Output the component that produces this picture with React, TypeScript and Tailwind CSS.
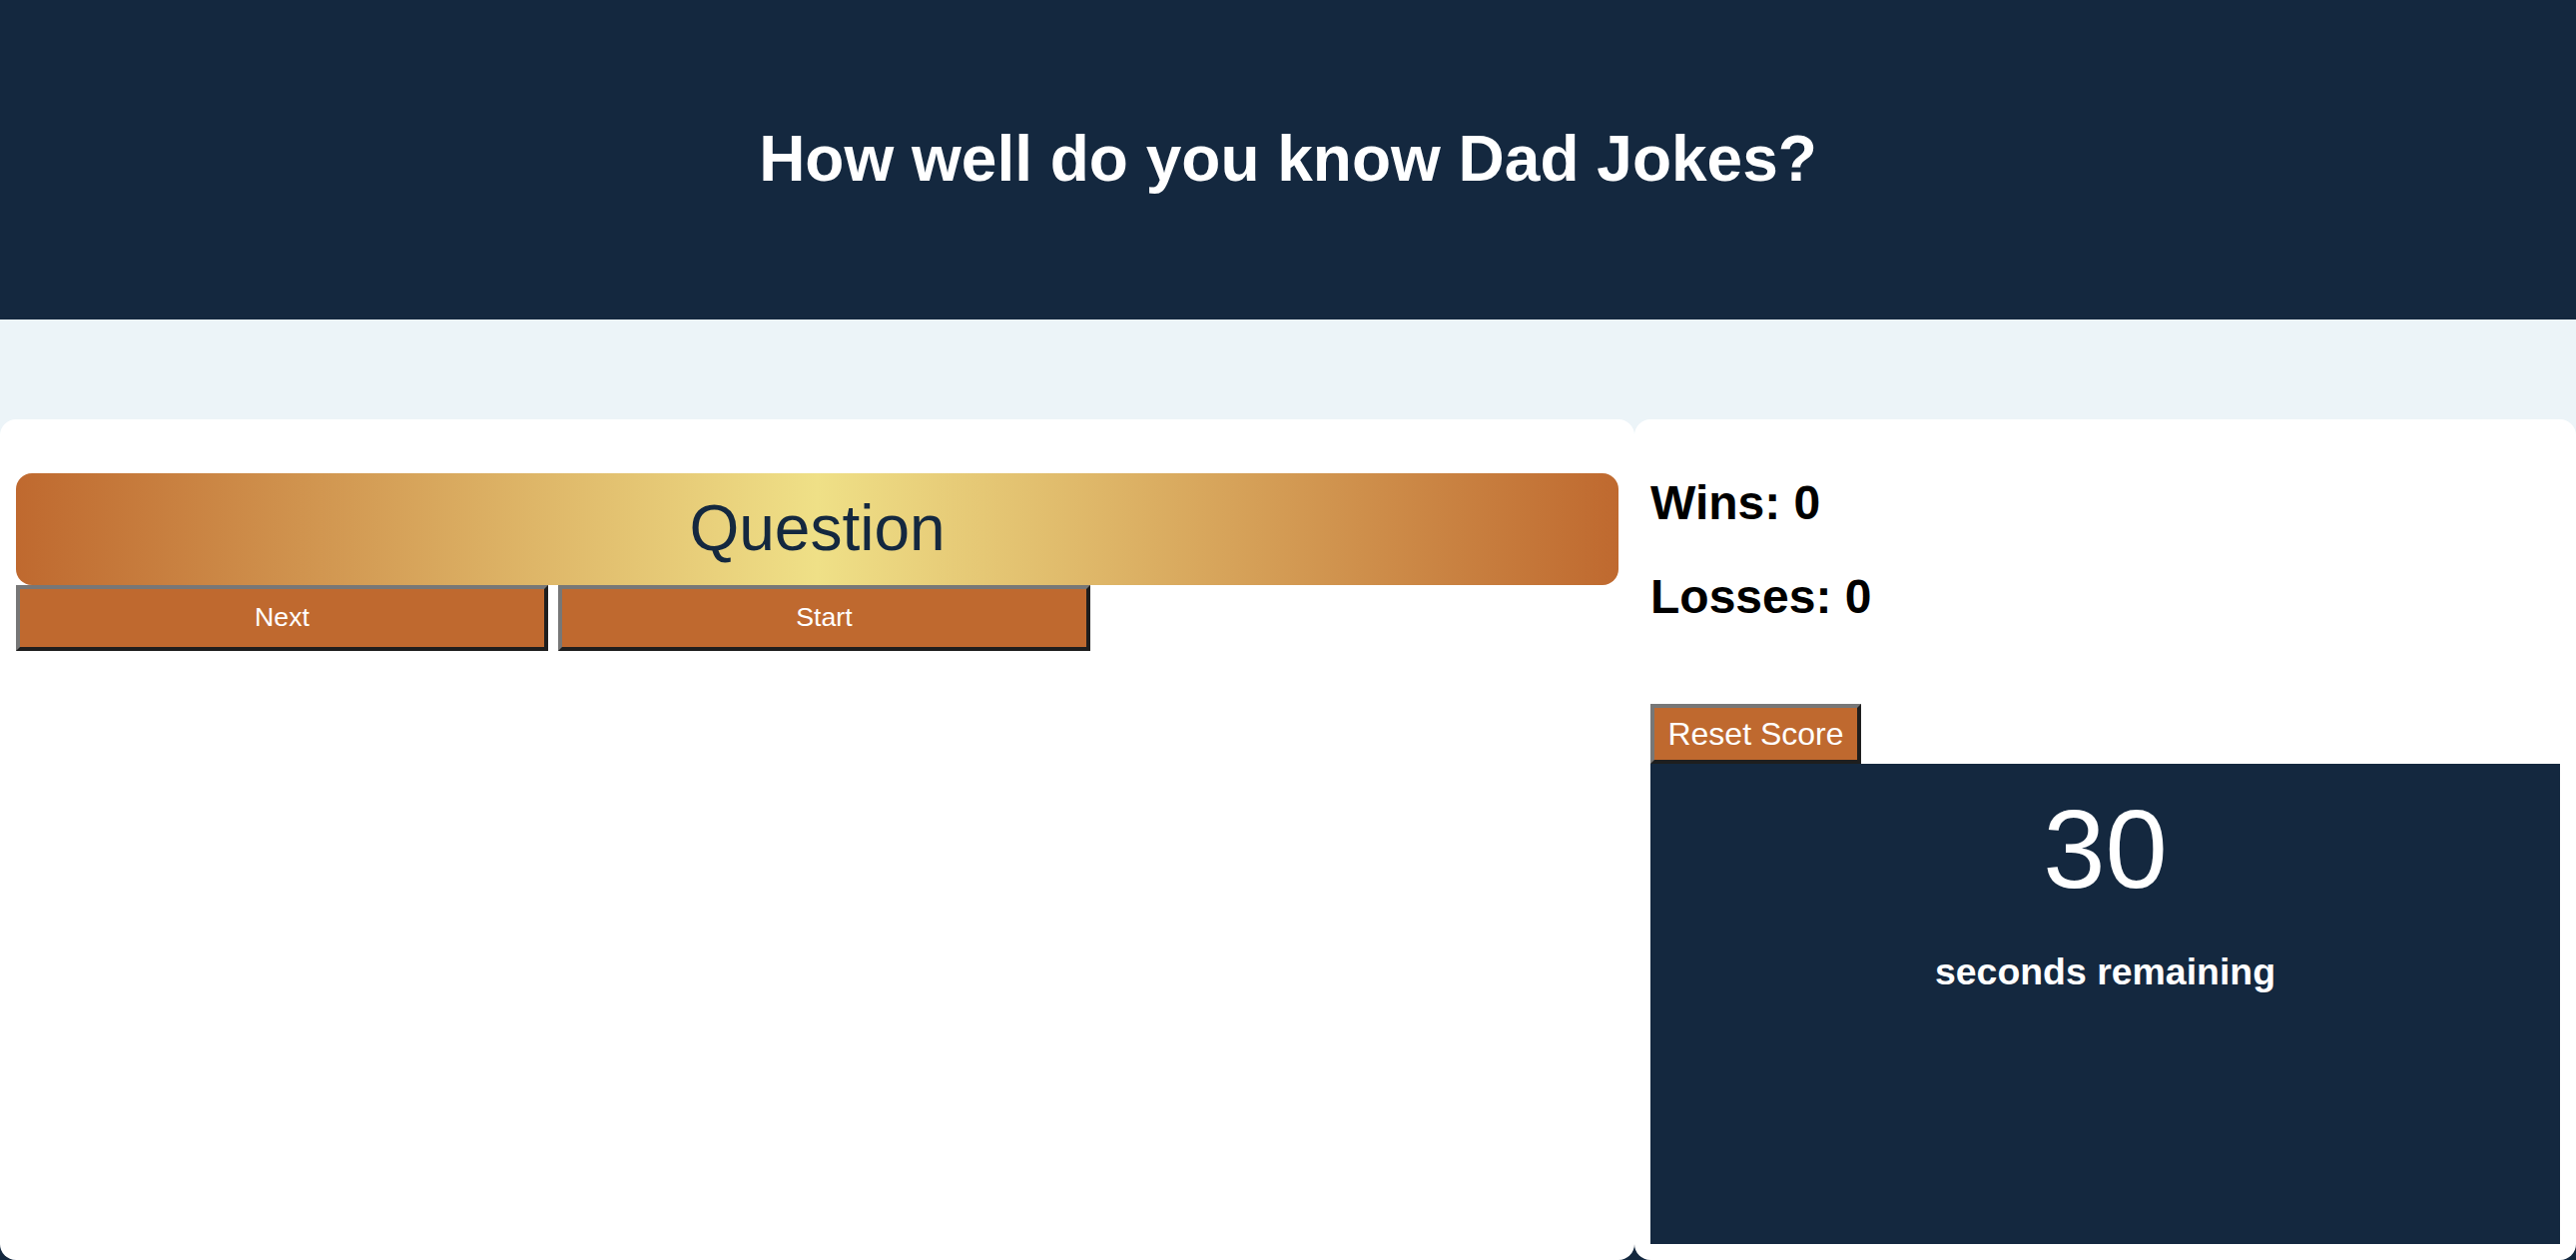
import React from "react";

const btn =
  "border-4 border-t-[#777777] border-l-[#777777] border-r-[#1e1e1e] border-b-[#1e1e1e] bg-[#bf692f] text-white flex items-center justify-center";

export default function App() {
  return (
    <div className="w-[2580px] min-h-[1262px] bg-[#14283f] font-['Liberation_Sans',Arial,sans-serif]">
      <header className="h-[320px] bg-[#14283f] flex items-center justify-center">
        <h1 className="text-[64px] font-bold text-white leading-[1.15]">How well do you know Dad Jokes?</h1>
      </header>
      <div className="h-[100px] bg-[#ecf4f8]" />
      <div className="flex h-[842px] bg-[linear-gradient(to_bottom,#ecf4f8_50%,#14283f_50%)]">
        <section className="w-[1637px] h-full bg-white rounded-2xl px-[16px] pt-[54px]">
          <div className="h-[112px] rounded-2xl bg-[linear-gradient(to_right,#bf692f,#efe087_50%,#bf692f)] flex items-center justify-center">
            <h2 className="text-[64px] text-[#14283f] leading-[1.15]">Question</h2>
          </div>
          <div className="flex gap-[10px]">
            <button className={`${btn} w-[533px] h-[66px] text-[26.67px] pb-[2px]`}>Next</button>
            <button className={`${btn} w-[533px] h-[66px] text-[26.67px] pb-[2px]`}>Start</button>
          </div>
        </section>
        <aside className="flex-1 h-full bg-white rounded-2xl px-[16px] pb-[16px] pt-[56px] flex flex-col">
          <h2 className="text-[48px] font-bold text-black leading-[55px]">Wins: 0</h2>
          <h2 className="text-[48px] font-bold text-black leading-[55px] mt-[39px]">Losses: 0</h2>
          <div className="mt-[80px]">
            <button className={`${btn} w-[211px] h-[60px] text-[32px]`}>Reset Score</button>
          </div>
          <div className="flex-1 bg-[#14283f] flex flex-col items-center pt-[21px]">
            <div className="text-[112px] text-white leading-[129px]">30</div>
            <h3 className="text-[37.44px] font-bold text-white leading-[43px] mt-[37px]">seconds remaining</h3>
          </div>
        </aside>
      </div>
    </div>
  );
}
